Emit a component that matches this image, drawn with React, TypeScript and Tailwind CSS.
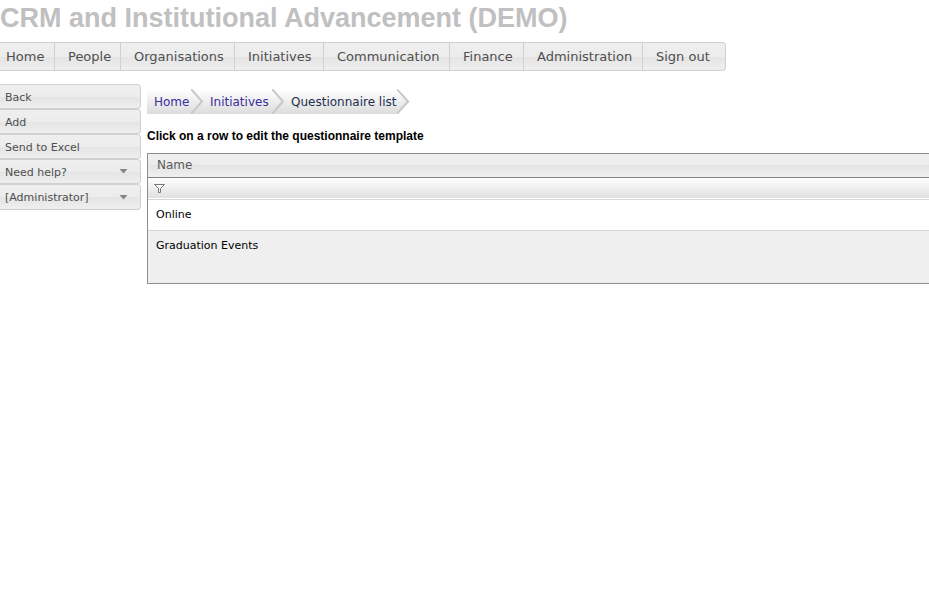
const navItems = [
  { label: 'Home', width: 'w-[55px] pl-[6px]' },
  { label: 'People', width: 'w-[66px] pl-[13px]' },
  { label: 'Organisations', width: 'w-[114px] pl-[13px]' },
  { label: 'Initiatives', width: 'w-[89px] pl-[13px]' },
  { label: 'Communication', width: 'w-[126px] pl-[13px]' },
  { label: 'Finance', width: 'w-[74px] pl-[13px]' },
  { label: 'Administration', width: 'w-[119px] pl-[13px]' },
  { label: 'Sign out', width: 'w-[83px] pl-[13px]' },
];

const sideItems = [
  { label: 'Back', menu: false },
  { label: 'Add', menu: false },
  { label: 'Send to Excel', menu: false },
  { label: 'Need help?', menu: true },
  { label: '[Administrator]', menu: true },
];

const crumbs = [
  { label: 'Home', look: 'w-[57px] pl-[7px] text-[#3a2f9c]' },
  { label: 'Initiatives', look: 'w-[81px] pl-[6px] text-[#3a2f9c]' },
  { label: 'Questionnaire list', look: 'w-[125px] pl-[6px] text-[#1c3050]' },
];

const gloss = 'bg-[linear-gradient(#efefef_0%,#ececec_50%,#e4e4e4_51%,#efefef_100%)]';

function Chevron() {
  return (
    <svg width="13" height="25" viewBox="0 0 13 25" className="-ml-3 shrink-0" aria-hidden="true">
      <path d="M0 0L11 12.5L0 25" fill="none" stroke="#c8c8c8" strokeWidth="2" />
    </svg>
  );
}

export default function App() {
  return (
    <div className="overflow-x-hidden bg-white font-['Verdana','DejaVu_Sans',sans-serif] text-[#4f4f4f]">
      <header>
        <h1 className="h-[42px] pt-[2px] font-['Liberation_Sans',Arial,sans-serif] text-[27px] leading-[32px] font-bold whitespace-nowrap text-[#c0c0c0]">
          CRM and Institutional Advancement (DEMO)
        </h1>
        <nav className={`flex h-[29px] w-fit rounded-r-[4px] border-y border-[#d0d0d0] ${gloss}`}>
          {navItems.map((item) => (
            <a
              key={item.label}
              href="#"
              className={`block shrink-0 border-r border-[#d0d0d0] text-[13px] leading-[27px] whitespace-nowrap last:rounded-r-[4px] ${item.width}`}
            >
              {item.label}
            </a>
          ))}
        </nav>
      </header>
      <div className="flex gap-[6px] pt-[13px]">
        <aside className="flex w-[141px] shrink-0 flex-col">
          {sideItems.map((item) => (
            <button
              key={item.label}
              type="button"
              className={`flex h-[25px] items-center justify-between rounded-r-[4px] border-y border-r border-[#d0d0d0] pt-[3px] pr-3 pl-[5px] text-left text-[11px] last:h-[26px] ${gloss}`}
            >
              {item.label}
              {item.menu && (
                <svg width="9" height="8" viewBox="0 0 9 8" aria-hidden="true">
                  <path d="M0.5 0H8.5L4.5 4.5Z" fill="#858585" />
                </svg>
              )}
            </button>
          ))}
        </aside>
        <main className="min-w-0 grow pt-[5px]">
          <nav aria-label="Breadcrumb" className="flex">
            {crumbs.map((crumb) => (
              <a
                key={crumb.label}
                href="#"
                className={`flex h-[25px] items-center justify-between bg-linear-to-b from-white to-[#dcdcdc] text-[12px] whitespace-nowrap last:[clip-path:polygon(0_0,calc(100%-12px)_0,100%_50%,calc(100%-12px)_100%,0_100%)] ${crumb.look}`}
              >
                {crumb.label}
                <Chevron />
              </a>
            ))}
          </nav>
          <h2 className="h-[39px] pt-[13px] font-['Liberation_Sans',Arial,sans-serif] text-[12px] leading-[18px] font-bold whitespace-nowrap text-black">
            Click on a row to edit the questionnaire template
          </h2>
          <div className="h-[131px] border-y border-l border-[#8f8f8f] bg-[#efefef]">
            <table className="w-full border-collapse text-left text-[11px] text-black">
              <thead>
                <tr className={`h-[23px] border-b border-[#808080] ${gloss}`}>
                  <th scope="col" className="pt-px pb-0 pl-[9px] text-[12px] leading-[21px] font-normal text-[#5a5a5a]">
                    Name
                  </th>
                </tr>
                <tr className="h-[22px] border-b border-[#d5d5d5] bg-linear-to-b from-white to-[#e0e0e0]">
                  <td className="py-0 pl-[6px]">
                    <button type="button" aria-label="Filter" className="block">
                      <svg width="11" height="9" viewBox="0 0 11 9" aria-hidden="true">
                        <path d="M0.5 0.5H10.5L6.5 4.5V8.5H4.5V4.5Z" fill="#f8f8f8" stroke="#777777" />
                      </svg>
                    </button>
                  </td>
                </tr>
              </thead>
              <tbody>
                <tr className="h-[31px] border-b border-[#d5d5d5] bg-white">
                  <td className="pt-[2px] pb-0 pl-2">Online</td>
                </tr>
                <tr className="h-[31px]">
                  <td className="pt-px pb-0 pl-2">Graduation Events</td>
                </tr>
              </tbody>
            </table>
          </div>
        </main>
      </div>
    </div>
  );
}
